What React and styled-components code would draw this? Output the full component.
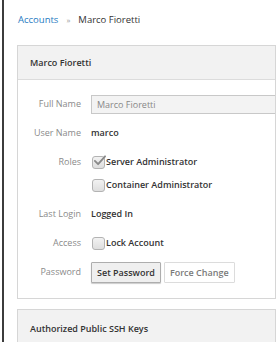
import React from "react";
import styled, { createGlobalStyle } from "styled-components";

const GlobalStyle = createGlobalStyle`
  html, body {
    margin: 0;
    padding: 0;
    background: #ffffff;
    font-family: "Open Sans", "Liberation Sans", sans-serif;
    font-size: 9px;
    color: #333333;
  }
`;

const App = () => {
  return (
    <>
      <GlobalStyle />
      <Page>
        <Breadcrumb>
          <a>Accounts</a>
          <span>»</span>
          <strong>Marco Fioretti</strong>
        </Breadcrumb>

        <Card>
          <CardHeader>Marco Fioretti</CardHeader>
          <CardBody>
            <Row>
              <Label>Full Name</Label>
              <TextInput defaultValue="Marco Fioretti" />
            </Row>
            <Row>
              <Label>User Name</Label>
              <Value>marco</Value>
            </Row>
            <Row>
              <Label>Roles</Label>
              <Stack>
                <Check checked>Server Administrator</Check>
                <Check>Container Administrator</Check>
              </Stack>
            </Row>
            <Row>
              <Label>Last Login</Label>
              <Value>Logged In</Value>
            </Row>
            <Row>
              <Label>Access</Label>
              <Check>Lock Account</Check>
            </Row>
            <Row>
              <Label>Password</Label>
              <Buttons>
                <Button $primary>Set Password</Button>
                <Button>Force Change</Button>
              </Buttons>
            </Row>
          </CardBody>
        </Card>

        <Card $second>
          <CardHeader $tall>Authorized Public SSH Keys</CardHeader>
        </Card>
      </Page>
    </>
  );
};

const Check = ({ checked, children }) => (
  <CheckLine>
    <Box>
      {checked && (
        <svg width="15" height="13" viewBox="0 0 16 14">
          <path
            d="M3 7.5 L6.5 11 L14 2.5"
            fill="none"
            stroke="#8a8a8a"
            strokeWidth="2"
            strokeLinecap="round"
            strokeLinejoin="round"
          />
        </svg>
      )}
    </Box>
    <Value>{children}</Value>
  </CheckLine>
);

export default App;

const Page = styled.div`
  margin-left: 2px;
  height: 342px;
  border-left: 2px solid #3c3c3c;
  padding-left: 13px;
  overflow: hidden;
`;

const Breadcrumb = styled.div`
  padding-top: 11px;
  padding-left: 1px;
  line-height: 18px;
  display: flex;
  align-items: center;
  gap: 8px;
  font-size: 9.5px;

  a {
    color: #1f7bc2;
  }
  span {
    color: #9a9a9a;
    font-size: 8px;
  }
  strong {
    font-weight: 400;
    color: #333;
  }
`;

const Card = styled.div`
  margin-top: ${(p) => (p.$second ? "10px" : "16px")};
  width: 257px;
  border: 1px solid #d6d6d6;
  background: #fff;
  overflow: hidden;
`;

const CardHeader = styled.div`
  height: ${(p) => (p.$tall ? "40px" : "33px")};
  line-height: ${(p) => (p.$tall ? "38px" : "33px")};
  padding-left: 12px;
  background: #f2f2f2;
  border-bottom: 1px solid #dcdcdc;
  font-weight: 600;
  color: #333;
`;

const CardBody = styled.div`
  padding: 14px 0 15px;
  display: flex;
  flex-direction: column;
  gap: 9px;
`;

const Row = styled.div`
  display: grid;
  grid-template-columns: 63px 1fr;
  column-gap: 10px;
  align-items: start;
  min-height: 20px;
`;

const Label = styled.div`
  text-align: right;
  line-height: 20px;
  color: #8a8a8a;
`;

const Value = styled.div`
  line-height: 20px;
  font-weight: 600;
  color: #333;
  white-space: nowrap;
`;

const TextInput = styled.input`
  box-sizing: border-box;
  width: 220px;
  height: 19px;
  margin-top: 1px;
  padding: 0 5px;
  border: 1px solid #c8c8c8;
  background: #f3f3f3;
  font-family: inherit;
  font-size: 9px;
  color: #888;
  outline: none;
`;

const Stack = styled.div`
  display: flex;
  flex-direction: column;
  gap: 3px;
`;

const CheckLine = styled.div`
  display: flex;
  align-items: center;
  gap: 1px;
`;

const Box = styled.span`
  position: relative;
  box-sizing: border-box;
  width: 13px;
  height: 13px;
  margin-left: 1px;
  border: 1px solid #b3b3b3;
  border-radius: 3px;
  background: linear-gradient(#f2f2f2, #dedede);

  svg {
    position: absolute;
    left: -1px;
    top: -3px;
  }
`;

const Buttons = styled.div`
  display: flex;
  gap: 3px;
`;

const Button = styled.button`
  height: 21px;
  padding: 0 5px;
  font-family: inherit;
  font-size: 9px;
  font-weight: 600;
  border-radius: 1px;
  border: 1px solid ${(p) => (p.$primary ? "#adadad" : "#dcdcdc")};
  background: ${(p) => (p.$primary ? "#efefef" : "#ffffff")};
  color: ${(p) => (p.$primary ? "#333" : "#7a7a7a")};
  box-shadow: ${(p) => (p.$primary ? "0 1px 1px rgba(0,0,0,0.2)" : "none")};
`;
